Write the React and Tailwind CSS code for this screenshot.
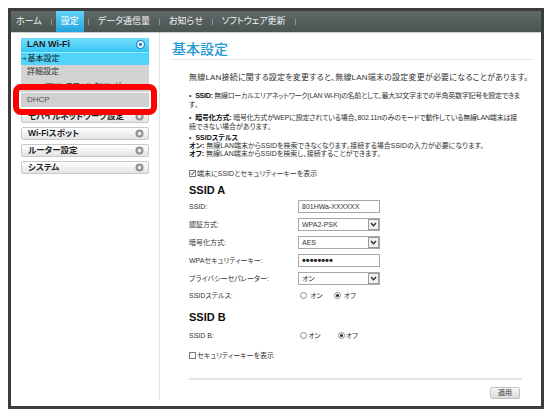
function Circle({ active }) {
  if (active) {
    return (
      <svg width="9" height="9" viewBox="0 0 9 9" className="shrink-0">
        <circle cx="4.5" cy="4.5" r="4" fill="#ffffff" stroke="#2a86cc" strokeWidth="1.2" />
        <circle cx="4.5" cy="4.5" r="1.8" fill="#2a86cc" />
      </svg>
    );
  }
  return (
    <svg width="9" height="9" viewBox="0 0 9 9" className="shrink-0">
      <circle cx="4.5" cy="4.5" r="4" fill="#8f8f8f" />
      <circle cx="4.5" cy="4.5" r="1.9" fill="#e9e9e9" />
    </svg>
  );
}

function MenuBox({ label }) {
  return (
    <div className="h-[13px] flex items-center justify-between pl-[6px] pr-[4px] bg-linear-to-b from-[#ffffff] to-[#e4e4e4] border border-[#c9c9c9] rounded-[2px] text-[8.5px] font-bold text-[#222] whitespace-nowrap">
      <span>{label}</span>
      <Circle />
    </div>
  );
}

function Radio({ checked }) {
  return (
    <span className="w-[7px] h-[7px] rounded-full border border-[#8a8a8a] bg-white flex items-center justify-center shrink-0">
      {checked && <span className="w-[3px] h-[3px] rounded-full bg-[#222]" />}
    </span>
  );
}

function Check({ checked }) {
  return (
    <span className="w-[7px] h-[7px] border border-[#7a7a7a] bg-white flex items-center justify-center shrink-0">
      {checked && (
        <svg width="7" height="7" viewBox="0 0 7 7">
          <path d="M1 3.4 L2.8 5.3 L6.2 0.8" fill="none" stroke="#222" strokeWidth="1.2" />
        </svg>
      )}
    </span>
  );
}

function Row({ label, children }) {
  return (
    <div className="h-[17.8px] flex items-center">
      <div className="w-[109px] whitespace-nowrap">{label}</div>
      {children}
    </div>
  );
}

function Input({ children }) {
  return (
    <div className="w-[82px] h-[13px] border border-[#a8a8a8] bg-white flex items-center px-[3px] text-[7px] text-[#333]">
      {children}
    </div>
  );
}

function Select({ value }) {
  return (
    <div className="w-[82px] h-[13px] border border-[#a8a8a8] bg-white flex items-stretch text-[7px] text-[#333]">
      <div className="flex-1 flex items-center px-[3px]">{value}</div>
      <div className="w-[11px] border border-[#9c9c9c] bg-[#f2f2f2] flex items-center justify-center">
        <svg width="7" height="5" viewBox="0 0 7 5">
          <path d="M1 1 L3.5 3.8 L6 1" fill="none" stroke="#2b2b2b" strokeWidth="1.3" />
        </svg>
      </div>
    </div>
  );
}

function NavItem({ label, active }) {
  return (
    <div
      className={
        active
          ? "flex items-center px-[5px] bg-linear-to-b from-[#62d3f6] to-[#1ea4dc] text-white"
          : "flex items-center px-[5px] text-[#f2f4f4]"
      }
    >
      {label}
    </div>
  );
}

function Sep() {
  return <div className="mx-[4px] self-center w-px h-[6px] bg-[#8d9795]" />;
}

export default function App() {
  return (
    <div className="relative w-[552px] h-[420px] bg-white overflow-hidden pt-[8px] pl-[8px] font-['Liberation_Sans','Noto_Sans_CJK_JP',sans-serif] [font-feature-settings:'palt'] text-[#333]">
      <div className="w-[536px] h-[401px] border-[3px] border-[#3c3c3c] bg-white flex flex-col">
        {/* nav */}
        <div className="h-[22px] shrink-0 flex items-stretch bg-linear-to-b from-[#5f6967] to-[#4a5452] border-b border-[#c6d1d4] text-[9px] whitespace-nowrap">
          <NavItem label="ホーム" />
          <Sep />
          <NavItem label="設定" active />
          <Sep />
          <NavItem label="データ通信量" />
          <Sep />
          <NavItem label="お知らせ" />
          <Sep />
          <NavItem label="ソフトウェア更新" />
          <Sep />
        </div>

        <div className="flex flex-1 min-h-0">
          {/* sidebar */}
          <div className="w-[149px] shrink-0 border-r border-[#e3e3e3] mb-[5px] px-[10px] pt-[5px]">
            <div className="flex flex-col">
              <div className="h-[13.5px] flex items-center justify-between pl-[6px] pr-[4px] bg-linear-to-b from-[#74defc] to-[#2ec6f4] text-[9px] font-bold text-[#1a1a1a]">
                <span>LAN Wi-Fi</span>
                <Circle active />
              </div>
              <div className="h-[13.5px] flex items-center pl-[1px] bg-[#52d3fa] border-t border-[#9be9fd] text-[8px] text-[#1a1a1a] whitespace-nowrap">
                <svg width="5" height="5" viewBox="0 0 5 5" className="mr-[0.5px]">
                  <path d="M0 2.5 H4 M2.5 1 L4 2.5 L2.5 4" fill="none" stroke="#1b5e8c" strokeWidth="0.9" />
                </svg>
                <span>基本設定</span>
              </div>
              <div className="h-[13.5px] flex items-center pl-[6px] bg-[#d3d3d3] text-[8px] text-[#333] whitespace-nowrap">
                詳細設定
              </div>
              <div className="h-[13px] flex items-center pl-[6px] pt-[3px] bg-[#d3d3d3] text-[8px] text-[#333] whitespace-nowrap">
                MACアドレスフィルタリング
              </div>
              <div className="h-[15px] flex items-center pl-[6px] bg-[#d0d0d0] border-t border-[#f4f4f4] text-[8px] text-[#5a4c52] whitespace-nowrap">
                DHCP
              </div>
            </div>
            <div className="mt-[3px] flex flex-col gap-[4px]">
              <MenuBox label="モバイルネットワーク設定" />
              <MenuBox label="Wi-Fiスポット" />
              <MenuBox label="ルーター設定" />
              <MenuBox label="システム" />
            </div>
          </div>

          {/* main */}
          <div className="flex-1 min-w-0 pl-[12px] pr-[9px] pt-[8px]">
            <div className="text-[14px] leading-[16px] font-medium text-[#1f9ad5] pb-[2px] border-b border-[#e6e6e6]">
              基本設定
            </div>
            <div className="pl-[17px] pr-[10px] text-[7px] leading-[9px] text-[#333]">
              <div className="mt-[12.5px] whitespace-nowrap text-[8px] tracking-[0.2px]">
                無線LAN接続に関する設定を変更すると、無線LAN端末の設定変更が必要になることがあります。
              </div>
              <div className="mt-[9px] whitespace-nowrap">
                <div className="tracking-[-0.25px]">
                  <span className="mr-[4px]">•</span>
                  <b className="text-[#111]">SSID:</b> 無線ローカルエリアネットワーク(LAN Wi-Fi)の名前として、最大32文字までの半角英数字記号を設定できま
                </div>
                <div>す。</div>
              </div>
              <div className="mt-[4px] whitespace-nowrap">
                <div className="tracking-[-0.2px]">
                  <span className="mr-[4px]">•</span>
                  <b className="text-[#111]">暗号化方式:</b> 暗号化方式がWEPに設定されている場合、802.11nのみのモードで動作している無線LAN端末は接
                </div>
                <div>続できない場合があります。</div>
              </div>
              <div className="mt-[3.5px] leading-[8px] whitespace-nowrap">
                <div>
                  <span className="mr-[4px]">•</span>
                  <b className="text-[#111]">SSIDステルス</b>
                </div>
                <div>
                  <b className="text-[#111]">オン:</b> 無線LAN端末からSSIDを検索できなくなります。接続する場合SSIDの入力が必要になります。
                </div>
                <div>
                  <b className="text-[#111]">オフ:</b> 無線LAN端末からSSIDを検索し、接続することができます。
                </div>
              </div>
              <div className="mt-[10.5px] flex items-center gap-[1px] whitespace-nowrap">
                <Check checked />
                <span>端末にSSIDとセキュリティーキーを表示</span>
              </div>
              <div className="mt-[6px] text-[11px] leading-[13px] font-bold text-[#111]">SSID A</div>
              <div className="mt-[1.5px]">
                <Row label="SSID:">
                  <Input>801HWa-XXXXXX</Input>
                </Row>
                <Row label="認証方式:">
                  <Select value="WPA2-PSK" />
                </Row>
                <Row label="暗号化方式:">
                  <Select value="AES" />
                </Row>
                <Row label="WPAセキュリティーキー:">
                  <Input>
                    <span className="text-[11px] leading-[11px] font-bold text-[#222]">••••••••</span>
                  </Input>
                </Row>
                <Row label="プライバシーセパレーター:">
                  <Select value="オン" />
                </Row>
                <Row label="SSIDステルス:">
                  <div className="flex items-center pl-[2px]">
                    <Radio />
                    <span className="ml-[3px]">オン</span>
                    <span className="ml-[11px]"><Radio checked /></span>
                    <span className="ml-[3px]">オフ</span>
                  </div>
                </Row>
              </div>
              <div className="mt-[6.7px] text-[11px] leading-[13px] font-bold text-[#111]">SSID B</div>
              <div className="mt-[2.5px] h-[18px] flex items-center">
                <div className="w-[109px]">SSID B:</div>
                <div className="flex items-center pl-[2px]">
                  <Radio />
                  <span className="ml-[1px]">オン</span>
                  <span className="ml-[17px]"><Radio checked /></span>
                  <span className="ml-[1px]">オフ</span>
                </div>
              </div>
              <div className="mt-[6.5px] flex items-center gap-[1px] whitespace-nowrap">
                <Check />
                <span>セキュリティーキーを表示</span>
              </div>
              <div className="mt-[17.5px] h-[2px] bg-[#e2e2e2]" />
              <div className="mt-[7px] flex justify-end pr-[2px]">
                <div className="w-[30px] h-[12px] flex items-center justify-center bg-linear-to-b from-[#f6f6f6] to-[#d9d9d9] border border-[#c4c4c4] rounded-[2px] text-[7px] text-[#333]">
                  適用
                </div>
              </div>
            </div>
          </div>
        </div>
      </div>

      {/* annotation highlight */}
      <div className="absolute left-[13px] top-[84px] w-[144px] h-[31px] border-[6px] border-[#ff0000] rounded-[8px]" />
    </div>
  );
}
